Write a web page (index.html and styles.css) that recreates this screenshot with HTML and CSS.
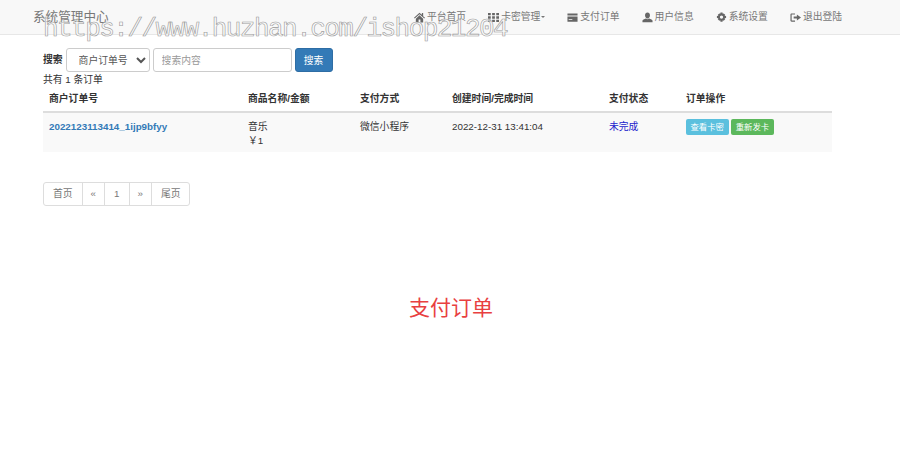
FILE: index.html
```html
<!DOCTYPE html>
<html lang="zh-CN">
<head>
    <meta charset="UTF-8">
    <meta name="viewport" content="width=device-width, initial-scale=1.0">
    <title>支付订单</title>
    <link rel="stylesheet" href="styles.css">
</head>
<body>
    <nav class="navbar">
        <a class="brand" href="#">系统管理中心</a>
        <ul class="nav-links">
            <li><svg class="icon" viewBox="0 0 12 12"><path d="M6 .8 0 6.400l.8.8L6 2.400l5.200 4.800.8-.8-2-1.900V1.200H8.600v1.800zM2 7.300V11.500h3V8.200h2v3.300h3V7.300L6 3.600z"/></svg>平台首页</li>
            <li><svg class="icon" viewBox="0 0 12 12"><path d="M0 1h3v2.600H0zM4.500 1h3v2.600h-3zM9 1h3v2.600H9zM0 4.700h3v2.600H0zM4.500 4.700h3v2.600h-3zM9 4.700h3v2.600H9zM0 8.400h3V11H0zM4.500 8.400h3V11h-3zM9 8.400h3V11H9z"/></svg>卡密管理<span class="caret"></span></li>
            <li><svg class="icon" viewBox="0 0 12 12"><path d="M.5 1.500h11v2.200H.5zM.5 5h11v5.500H.5zM1.800 7.500v1h4v-1z"/></svg>支付订单</li>
            <li><svg class="icon" viewBox="0 0 12 12"><path d="M6 .5c1.700 0 2.700 1.300 2.700 3S7.600 7 6 7 3.300 5.200 3.300 3.500 4.300.5 6 .5zM4.200 7l1.800 1 1.800-1c1.700.6 3.700 1.300 3.700 2.500v1.700H.5V9.500C.5 8.300 2.500 7.600 4.200 7z"/></svg>用户信息</li>
            <li><svg class="icon" viewBox="0 0 12 12"><path d="M4.900.5h2.200l.3 1.500 1-.5 1.600 1.600-.6 1 1.600.3v2.200l-1.600.3.600 1-1.600 1.600-1-.6-.3 1.600H4.900l-.3-1.600-1 .6L2 7.900l.6-1L1 6.600V4.400l1.600-.3-.6-1 1.600-1.600 1 .5zM6 3.700a1.800 1.800 0 1 0 0 3.600 1.800 1.800 0 0 0 0-3.600z"/></svg>系统设置</li>
            <li><svg class="icon" viewBox="0 0 12 12"><path d="M5.500 1.500H1.800C1 1.500.5 2 .5 2.800v6.400c0 .8.5 1.300 1.300 1.300h3.700V9.200H1.800V2.800h3.700zM7.500 2.800v2H4v2.400h3.500v2L12 6z"/></svg>退出登陆</li>
        </ul>
    </nav>

    <div class="watermark">https://www.huzhan.com/ishop21204</div>

    <main class="container">
        <form class="search">
            <label>搜索</label>
            <select class="control select">
                <option>商户订单号</option>
            </select>
            <input class="control keyword" type="text" placeholder="搜索内容">
            <button class="btn-search" type="button">搜索</button>
        </form>
        <p class="total">共有 1 条订单</p>

        <table>
            <thead>
                <tr>
                    <th class="col-no">商户订单号</th>
                    <th class="col-goods">商品名称/金额</th>
                    <th class="col-pay">支付方式</th>
                    <th class="col-time">创建时间/完成时间</th>
                    <th class="col-status">支付状态</th>
                    <th>订单操作</th>
                </tr>
            </thead>
            <tbody>
                <tr>
                    <td><a class="order-no" href="#">2022123113414_1ijp9bfyy</a></td>
                    <td>音乐<br>￥1</td>
                    <td>微信小程序</td>
                    <td>2022-12-31 13:41:04</td>
                    <td class="unpaid">未完成</td>
                    <td class="actions">
                        <a class="tag tag-info" href="#">查看卡密</a>
                        <a class="tag tag-success" href="#">重新发卡</a>
                    </td>
                </tr>
            </tbody>
        </table>

        <ul class="pagination">
            <li>首页</li>
            <li class="arrow">«</li>
            <li>1</li>
            <li class="arrow">»</li>
            <li class="last">尾页</li>
        </ul>

        <h1 class="page-title">支付订单</h1>
    </main>
</body>
</html>
```

FILE: styles.css
```css
* {
    box-sizing: border-box;
}
body {
    margin: 0;
    font-family: "Liberation Sans", "Noto Sans CJK SC", sans-serif;
    font-size: 9.8px;
    line-height: 14px;
    color: #333;
    background-color: #fff;
}
a {
    text-decoration: none;
}
.navbar {
    display: flex;
    align-items: center;
    height: 35px;
    padding-left: 33px;
    background-color: #f8f8f8;
    border-bottom: 1px solid #e7e7e7;
}
.brand {
    font-size: 12.6px;
    color: #777;
}
.nav-links {
    display: flex;
    gap: 22px;
    margin: 0 0 0 305.4px;
    padding: 0;
    list-style: none;
    color: #777;
}
.nav-links li {
    display: flex;
    align-items: center;
    white-space: nowrap;
}
.icon {
    width: 11px;
    height: 11px;
    margin-right: 2px;
    fill: #666;
}
.caret {
    width: 0;
    height: 0;
    margin-left: 1px;
    border-top: 2.5px solid #777;
    border-left: 2.5px solid transparent;
    border-right: 2.5px solid transparent;
}
.watermark {
    position: absolute;
    top: 15px;
    left: 43px;
    font-family: "Liberation Mono", monospace;
    font-size: 26px;
    letter-spacing: -1.54px;
    line-height: 28px;
    color: rgba(255, 255, 255, 0.6);
    -webkit-text-stroke: 0.6px #999;
    white-space: nowrap;
}
.container {
    padding: 13px 68px 0 43px;
}
.search {
    display: flex;
    align-items: center;
    height: 24px;
}
.search label {
    margin-right: 3px;
    font-weight: bold;
}
.control {
    height: 24px;
    font-family: inherit;
    font-size: 9.8px;
    color: #555;
    background-color: #fff;
    border: 1px solid #ccc;
    border-radius: 3px;
}
.select {
    width: 84px;
    padding: 0 0 0 8px;
}
.keyword {
    width: 139px;
    margin-left: 3px;
    padding: 0 8px;
}
.keyword::placeholder {
    color: #999;
}
.btn-search {
    width: 38px;
    height: 24px;
    margin-left: 3px;
    padding: 0;
    font-family: inherit;
    font-size: 9.8px;
    color: #fff;
    background-color: #337ab7;
    border: 1px solid #2e6da4;
    border-radius: 3px;
}
.total {
    margin: 1px 0 0;
    height: 14px;
}
table {
    width: 789px;
    border-collapse: collapse;
    table-layout: fixed;
}
th, td {
    padding: 7px 6px 4px;
    text-align: left;
    vertical-align: top;
}
th {
    height: 25px;
    padding: 5px 6px 3px;
    border-bottom: 2px solid #ddd;
}
td {
    height: 39px;
    background-color: #f9f9f9;
}
.col-no {
    width: 199px;
}
.col-goods {
    width: 112px;
}
.col-pay {
    width: 92px;
}
.col-time {
    width: 157px;
}
.col-status {
    width: 77px;
}
.order-no {
    font-weight: bold;
    color: #337ab7;
}
.unpaid {
    color: #22c;
}
td.actions {
    padding-top: 6px;
}
.tag {
    display: inline-block;
    vertical-align: top;
    padding: 1px 4.5px;
    font-size: 8.4px;
    line-height: 14px;
    color: #fff;
    border-radius: 2px;
}
.tag-info {
    background-color: #5bc0de;
}
.tag-success {
    background-color: #5cb85c;
}
.pagination {
    display: flex;
    width: max-content;
    margin: 30px 0 0;
    padding: 0;
    list-style: none;
    color: #777;
    background-color: #fff;
    border: 1px solid #ddd;
    border-radius: 3px;
}
.pagination li {
    height: 22px;
    padding: 4px 9px;
    border-left: 1px solid #ddd;
}
.pagination li:first-child {
    border-left: none;
}
.pagination .arrow {
    padding: 4px 8px;
}
.pagination .last {
    padding-right: 8px;
}
.page-title {
    margin: 87px 0 0;
    padding-left: 27px;
    font-size: 21px;
    line-height: 30px;
    font-weight: normal;
    text-align: center;
    color: #e84040;
}
```
